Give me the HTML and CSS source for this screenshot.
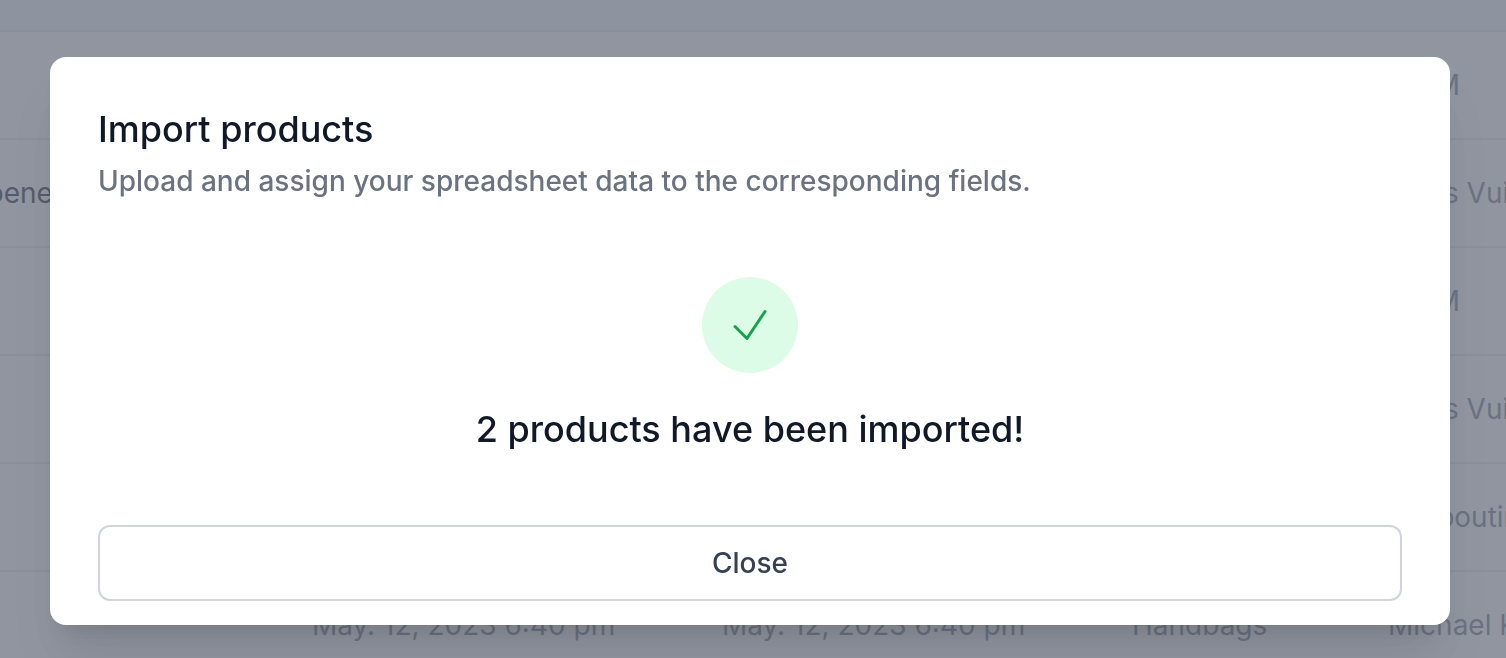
FILE: index.html
```html
<!DOCTYPE html>
<html lang="en">

<head>
    <meta charset="UTF-8" />
    <meta name="viewport" content="width=device-width, initial-scale=1" />
    <title>Products</title>
    <link rel="stylesheet" href="styles.css">
</head>

<body>
    <!-- Product list, scrolled sideways -->
    <main class="page">
        <table class="products">
            <colgroup>
                <col class="col-name">
                <col class="col-date">
                <col class="col-date">
                <col class="col-category">
                <col class="col-brand">
            </colgroup>
            <thead>
                <tr>
                    <th></th>
                    <th></th>
                    <th></th>
                    <th></th>
                    <th></th>
                </tr>
            </thead>
            <tbody>
                <tr>
                    <td></td>
                    <td></td>
                    <td></td>
                    <td></td>
                    <td>H &amp;M</td>
                </tr>
                <tr>
                    <td class="name">Bottle opener</td>
                    <td></td>
                    <td></td>
                    <td></td>
                    <td>Louis Vuitton</td>
                </tr>
                <tr>
                    <td></td>
                    <td></td>
                    <td></td>
                    <td></td>
                    <td>H &amp;M</td>
                </tr>
                <tr>
                    <td></td>
                    <td></td>
                    <td></td>
                    <td></td>
                    <td>Louis Vuitton</td>
                </tr>
                <tr>
                    <td></td>
                    <td></td>
                    <td></td>
                    <td></td>
                    <td>Louboutin</td>
                </tr>
                <tr>
                    <td></td>
                    <td>May. 12, 2023 6:40 pm</td>
                    <td>May. 12, 2023 6:40 pm</td>
                    <td>Handbags</td>
                    <td>Michael Kors</td>
                </tr>
            </tbody>
        </table>
    </main>

    <!-- Import dialog -->
    <div class="overlay">
        <div class="modal" role="dialog" aria-modal="true" aria-labelledby="modalTitle">
            <h1 id="modalTitle">Import products</h1>
            <p class="subtitle">Upload and assign your spreadsheet data to the corresponding fields.</p>

            <div class="result">
                <div class="result-icon">
                    <svg viewBox="0 0 24 24" fill="none" stroke="currentColor" stroke-width="1.5" aria-hidden="true">
                        <path stroke-linecap="round" stroke-linejoin="round" d="M4.5 12.75l6 6 9-13.5" />
                    </svg>
                </div>
                <h2>2 products have been imported!</h2>
            </div>

            <button type="button" class="close-btn">Close</button>
        </div>
    </div>
</body>

</html>
```

FILE: styles.css
```css
* {
    box-sizing: border-box;
}

body {
    font-family: Inter, "Liberation Sans", sans-serif;
    font-size: 28px;
    line-height: 40px;
    color: #6b7280;
    background: #fff;
    margin: 0;
}

h1,
h2 {
    font-size: 36px;
    font-weight: 500;
    line-height: 48px;
    color: #111827;
    margin: 0;
}

/* --- Product list --- */
.page {
    height: 100vh;
    overflow: hidden;
}

.products {
    width: 1900px;
    margin-left: -138px;
    table-layout: fixed;
    border-collapse: separate;
    border-spacing: 0;
}

.col-name {
    width: 426px;
}

.col-date {
    width: 410px;
}

.col-category {
    width: 256px;
}

.products th {
    height: 32px;
    padding: 0;
    background: #f1f5f9;
    border-bottom: 2px solid #e5e7eb;
}

.products td {
    height: 108px;
    padding: 0 24px;
    border-bottom: 2px solid #e5e7eb;
    white-space: nowrap;
}

.products .name {
    color: #111827;
}

/* --- Dialog --- */
.overlay {
    position: fixed;
    inset: 0;
    display: flex;
    align-items: flex-start;
    padding: 57px 56px 0 50px;
    background: rgba(107, 114, 128, 0.75);
}

.modal {
    flex: 1;
    padding: 48px 48px 24px;
    background: #fff;
    border-radius: 16px;
    box-shadow: 0 40px 50px -10px rgba(0, 0, 0, 0.1), 0 16px 20px -12px rgba(0, 0, 0, 0.1);
}

.subtitle {
    font-weight: 500;
    margin: 8px 0 0;
}

.result {
    display: flex;
    flex-direction: column;
    align-items: center;
    gap: 32px;
    padding: 76px 0 72px;
    text-align: center;
}

.result-icon {
    display: flex;
    align-items: center;
    justify-content: center;
    width: 96px;
    height: 96px;
    border-radius: 50%;
    background: #dcfce7;
    color: #16a34a;
}

.result-icon svg {
    width: 48px;
    height: 48px;
}

.close-btn {
    display: block;
    width: 100%;
    padding: 16px 32px;
    font: inherit;
    font-weight: 500;
    color: #374151;
    background: #fff;
    border: 2px solid #d1d5db;
    border-radius: 12px;
    cursor: pointer;
}

.close-btn:hover {
    background: #f9fafb;
}
```
